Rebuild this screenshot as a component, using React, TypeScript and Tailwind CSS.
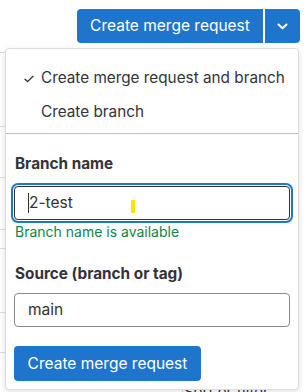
import React from "react";

function Check() {
  return (
    <svg width="10" height="8" viewBox="0 0 10 8" fill="none">
      <path d="M1 4.2 L3.6 6.6 L9 1.2" stroke="#333238" strokeWidth="1.3" strokeLinecap="round" strokeLinejoin="round" />
    </svg>
  );
}

function Chevron() {
  return (
    <svg width="11" height="7" viewBox="0 0 11 7" fill="none">
      <path d="M1.5 1.5 L5.5 5.2 L9.5 1.5" stroke="#fff" strokeWidth="2" strokeLinecap="round" strokeLinejoin="round" />
    </svg>
  );
}

export default function App() {
  const bgLines = [52, 126, 177, 229, 248, 312, 352];
  return (
    <div
      className="relative w-[306px] h-[392px] overflow-hidden bg-white text-[#333238]"
      style={{ fontFamily: "Inter, 'Noto Sans', sans-serif" }}
    >
      {/* background page fragments */}
      {bgLines.map((y) => (
        <div key={y} className="absolute left-0 w-[8px] h-px bg-[#dcdcde]" style={{ top: y }} />
      ))}
      <div className="absolute left-[182px] top-[383px] w-px h-[10px] bg-[#dcdcde]" />
      <div className="absolute left-[184px] top-[383px] text-[15px] leading-[18px] text-[#333238]">Sort or filter</div>

      {/* split button */}
      <div className="flex justify-end pt-[9px] pr-[6px] gap-[2px]">
        <button className="h-[34px] w-[186px] rounded-l-[4px] bg-[#1f75cb] text-white text-[15.5px] flex items-center justify-center">
          Create merge request
        </button>
        <button className="h-[34px] w-[35px] rounded-r-[4px] bg-[#1f75cb] flex items-center justify-center">
          <Chevron />
        </button>
      </div>

      {/* dropdown panel */}
      <div className="absolute left-[5px] top-[48px] w-[294px] h-[342px] rounded-[4px] border border-[#dcdcde] bg-white shadow-[0_2px_6px_rgba(0,0,0,0.12)] flex flex-col">
        <div className="mt-[12px] flex flex-col">
          <div className="h-[34px] flex items-center">
            <div className="w-[35px] flex justify-end pr-[7px] pt-[2px]">
              <Check />
            </div>
            <span className="text-[15.3px] leading-[20px]">Create merge request and branch</span>
          </div>
          <div className="h-[34px] flex items-center">
            <div className="w-[35px]" />
            <span className="text-[15.3px] leading-[20px]">Create branch</span>
          </div>
        </div>
        <div className="mt-[4px] h-px bg-[#bfbfc3]" />
        <div className="flex flex-col px-[8px]">
          <label className="mt-[20px] text-[15.3px] leading-[20px] font-bold pl-[1px]">Branch name</label>
          <div className="relative mt-[12px] h-[34px] w-[276px] rounded-[4px] border border-[#333238] shadow-[0_0_0_1px_#fff,0_0_0_3px_#1f75cb] flex items-center pl-[13px] text-[15.5px]">
            <span className="w-px h-[20px] bg-[#333238]" />
            <span>2-test</span>
            <span className="absolute left-[116px] top-[13px] w-[4px] h-[13px] bg-[#ffe600]" />
          </div>
          <div className="mt-[3px] text-[14px] leading-[18px] text-[#108548] pl-[1px]">Branch name is available</div>
          <label className="mt-[23px] text-[15.3px] leading-[20px] font-bold pl-[1px]">Source (branch or tag)</label>
          <div className="mt-[9px] h-[34px] w-[276px] rounded-[4px] border border-[#89888d] flex items-center pl-[13px] text-[15.5px]">
            main
          </div>
          <button className="mt-[19px] h-[35px] w-[187px] rounded-[4px] bg-[#1f75cb] text-white text-[15.5px] flex items-center justify-center">
            Create merge request
          </button>
        </div>
      </div>
    </div>
  );
}
